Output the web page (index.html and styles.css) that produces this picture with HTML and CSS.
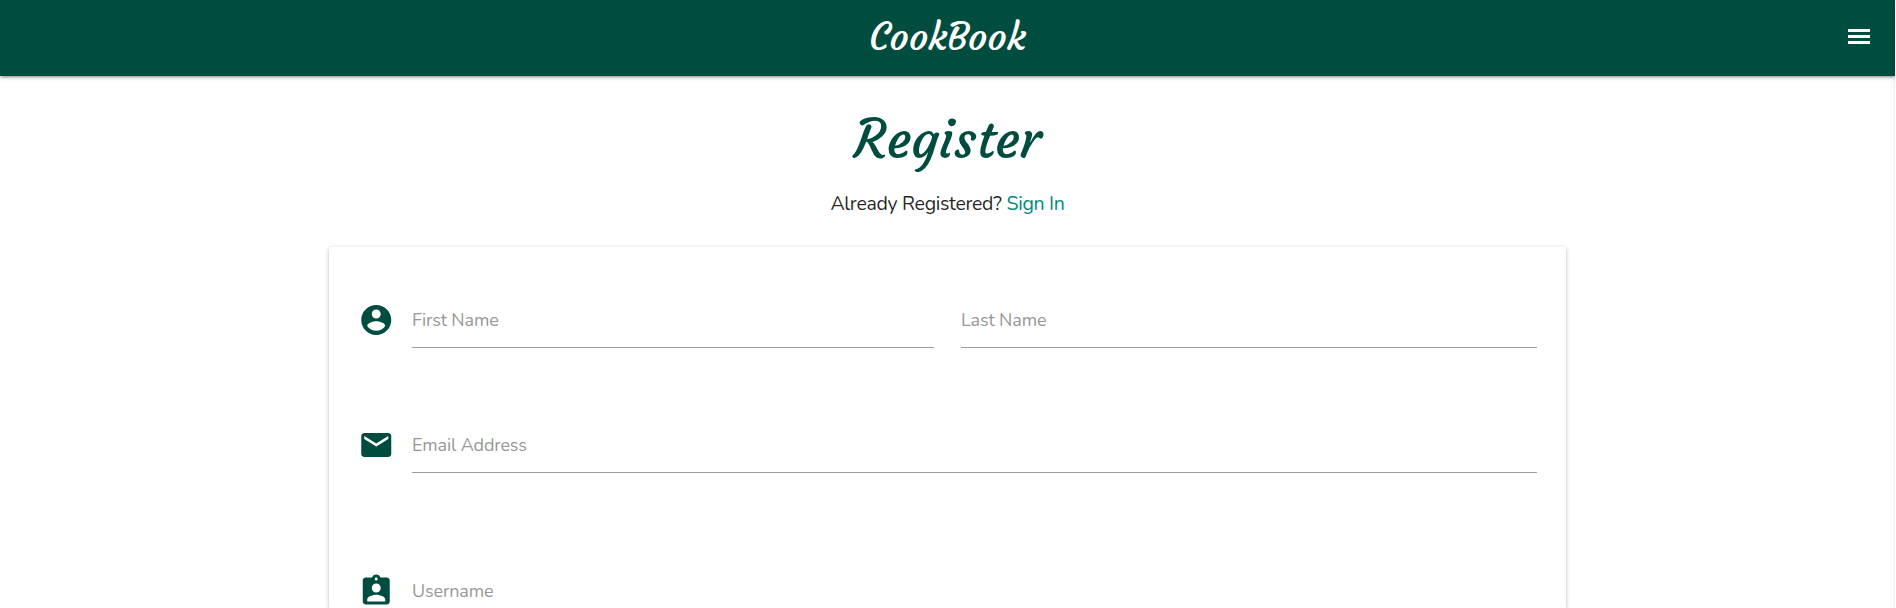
FILE: index.html
```html
<!DOCTYPE html>
<html lang="en">
<head>
<meta charset="utf-8">
<title>CookBook - Register</title>
<link rel="stylesheet" href="styles.css">
</head>
<body>
<nav class="navbar">
  <a class="brand">CookBook</a>
  <svg class="menu-icon" viewBox="0 0 30 30"><path d="M4 7h22v3H4zM4 13h22v3H4zM4 19h22v3H4z"/></svg>
</nav>
<div class="drawer"></div>
<main class="container">
  <h1 class="title">Register</h1>
  <p class="prompt"><span>Already Registered?</span> <a class="signin">Sign In</a></p>
  <form class="card">
    <div class="row row-name">
      <svg class="icon" viewBox="0 0 24 24"><path d="M12 2C6.480 2 2 6.480 2 12s4.480 10 10 10 10-4.480 10-10S17.520 2 12 2zm0 3c1.660 0 3 1.340 3 3s-1.340 3-3 3-3-1.340-3-3 1.340-3 3-3zm0 14.200c-2.500 0-4.710-1.280-6-3.220.030-1.990 4-3.080 6-3.080 1.990 0 5.970 1.090 6 3.080-1.290 1.940-3.500 3.220-6 3.220z"/></svg>
      <label class="field field-first">First Name</label>
      <label class="field">Last Name</label>
    </div>
    <div class="row row-email">
      <svg class="icon" viewBox="0 0 24 24"><path d="M20 4H4c-1.100 0-1.990.900-1.990 2L2 18c0 1.100.900 2 2 2h16c1.100 0 2-.900 2-2V6c0-1.100-.900-2-2-2zm0 4l-8 5-8-5V6l8 5 8-5v2z"/></svg>
      <label class="field">Email Address</label>
    </div>
    <div class="row row-user">
      <svg class="icon" viewBox="0 0 24 24"><path d="M19 3h-4.180C14.400 1.840 13.300 1 12 1c-1.300 0-2.400.840-2.820 2H5c-1.100 0-2 .900-2 2v14c0 1.100.900 2 2 2h14c1.100 0 2-.900 2-2V5c0-1.100-.900-2-2-2zm-7 0c.550 0 1 .450 1 1s-.450 1-1 1-1-.450-1-1 .450-1 1-1zm0 4c1.660 0 3 1.340 3 3s-1.340 3-3 3-3-1.340-3-3 1.340-3 3-3zm6 12H6v-1.400c0-2 4-3.100 6-3.100s6 1.100 6 3.100V19z"/></svg>
      <label class="field field-user">Username</label>
    </div>
  </form>
</main>
</body>
</html>
```
FILE: styles.css
```css
* { box-sizing: border-box; }
html, body { margin: 0; height: 100%; overflow: hidden; }
body {
  background: #fff;
  color: rgba(0, 0, 0, .87);
  font-family: Nunito, Lato, sans-serif;
}
.navbar {
  display: grid;
  grid-template-columns: 1fr auto 1fr;
  align-items: center;
  width: 1895px;
  height: 76px;
  padding: 0 21px;
  background: #004d40;
  color: #fff;
  box-shadow: 0 2px 2px rgba(0,0,0,.14), 0 3px 1px -2px rgba(0,0,0,.12), 0 1px 5px rgba(0,0,0,.2);
}
.brand {
  grid-column: 2;
  font: 400 37.8px/72px Courgette, Lato, cursive;
  padding-bottom: 2px;
}
.menu-icon {
  justify-self: end;
  width: 30px;
  height: 30px;
  margin-bottom: 2px;
  fill: #fff;
}
/* Closed side menu: only its edge shadow shows */
.drawer {
  position: absolute;
  top: 0;
  right: 0;
  width: 1px;
  height: 100%;
  background: #fff;
  box-shadow: 0 2px 2px rgba(0,0,0,.14), 0 3px 1px -2px rgba(0,0,0,.12), 0 1px 5px rgba(0,0,0,.2);
}
.container { width: 1237px; margin: 0 0 0 329px; }
.title {
  margin: 0;
  padding-top: 31px;
  height: 113px;
  text-align: center;
  color: #004d40;
  font: 400 52.500px/66px Courgette, Lato, cursive;
}
.prompt {
  display: flex;
  justify-content: center;
  gap: 5px;
  margin: 0;
  height: 58px;
  font-size: 19.500px;
  letter-spacing: -.3px;
  line-height: 30px;
}
.signin { color: #00897b; }
.card {
  height: 361px;
  padding: 44px 29px 0;
  border-radius: 2px 2px 0 0;
  background: #fff;
  box-shadow: 0 2px 2px rgba(0,0,0,.14), 0 3px 1px -2px rgba(0,0,0,.12), 0 1px 5px rgba(0,0,0,.2);
}
.row { display: flex; }
.row-name { height: 125px; }
.row-email { height: 146px; }
.row-user { height: 46px; }
.icon {
  flex: none;
  width: 36.500px;
  height: 36px;
  margin: 11px 17.500px 0 0;
  fill: #004d40;
}
.row-user .icon { margin-bottom: -1px; }
.field {
  flex: 1;
  height: 57px;
  border-bottom: 1px solid #9e9e9e;
  color: #979797;
  font-size: 18px;
  letter-spacing: -.15px;
  line-height: 58px;
}
.field-first { flex: 0 0 522px; margin-right: 27px; }
.field-user { height: 46px; border: 0; overflow: hidden; }
```
